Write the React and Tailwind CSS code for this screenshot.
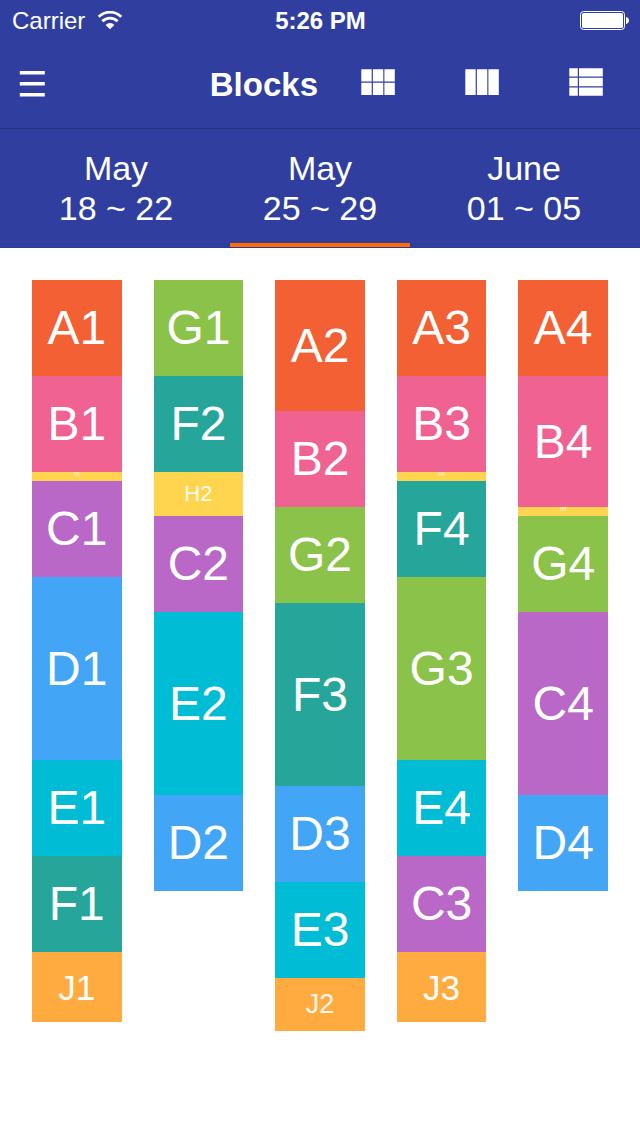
const COLORS = {
  A: "bg-[#f26033]",
  B: "bg-[#f06292]",
  C: "bg-[#ba68c8]",
  D: "bg-[#42a5f5]",
  E: "bg-[#00bcd4]",
  F: "bg-[#26a69a]",
  G: "bg-[#8bc34a]",
  H: "bg-[#ffd54f]",
  J: "bg-[#ffab40]",
};

const SIZES = {
  tiny: "h-[9px] items-start text-[5px] leading-[5px] text-white/80",
  short: "h-11 items-center text-[22px] leading-none text-white/90",
  small: "h-[53px] items-center text-[27px] leading-none text-white/90",
  medium: "h-[70px] items-center text-[35px] leading-none text-white",
  normal: "h-24 items-center text-5xl leading-none text-white",
  long: "h-[131px] items-center text-5xl leading-none text-white",
  double: "h-[183px] items-center text-5xl leading-none text-white",
};

const DAYS = [
  [["A1", "normal"], ["B1", "normal"], ["H1", "tiny"], ["C1", "normal"], ["D1", "double"], ["E1", "normal"], ["F1", "normal"], ["J1", "medium"]],
  [["G1", "normal"], ["F2", "normal"], ["H2", "short"], ["C2", "normal"], ["E2", "double"], ["D2", "normal"]],
  [["A2", "long"], ["B2", "normal"], ["G2", "normal"], ["F3", "double"], ["D3", "normal"], ["E3", "normal"], ["J2", "small"]],
  [["A3", "normal"], ["B3", "normal"], ["H3", "tiny"], ["F4", "normal"], ["G3", "double"], ["E4", "normal"], ["C3", "normal"], ["J3", "medium"]],
  [["A4", "normal"], ["B4", "long"], ["H4", "tiny"], ["G4", "normal"], ["C4", "double"], ["D4", "normal"]],
];

const WEEKS = [
  { month: "May", days: "18 ~ 22" },
  { month: "May", days: "25 ~ 29", active: true },
  { month: "June", days: "01 ~ 05" },
];

function StatusBar() {
  return (
    <div className="grid h-10 grid-cols-3 items-center pt-0.5 pr-[11px] pl-3 text-2xl leading-none">
      <div className="flex items-center gap-3">
        <span>Carrier</span>
        <svg className="mb-0.5 h-[19px] w-[26px]" viewBox="0 0 26 19" fill="none" stroke="currentColor" aria-hidden="true">
          <path d="M1.700 5.800a16 16 0 0 1 22.600 0" strokeWidth="2.800" />
          <path d="M5.400 10.200a10.700 10.700 0 0 1 15.200 0" strokeWidth="2.800" />
          <path d="M13 18.300L8.600 13.900a6.200 6.200 0 0 1 8.800 0z" fill="currentColor" stroke="none" />
        </svg>
      </div>
      <span className="text-center font-bold">5:26 PM</span>
      <svg className="mb-0.5 h-[19px] w-[49px] justify-self-end" viewBox="0 0 49 19" fill="currentColor" aria-hidden="true">
        <rect x="0.5" y="0.5" width="44" height="18" rx="3" fill="none" stroke="currentColor" />
        <rect x="2" y="2" width="41" height="15" rx="1.5" />
        <path d="M46 6c2 .4 3 1.700 3 3.500s-1 3.100-3 3.500z" />
      </svg>
    </div>
  );
}

function GridIcon() {
  return (
    <svg className="h-7 w-[34px]" viewBox="0 0 34 28" fill="currentColor" aria-hidden="true">
      <path d="M.3 1.300h10.400v12.100H.3zM11.900 1.300h10.400v12.100H11.900zM23.400 1.300h10.400v12.100h-10.400zM.3 14.800h10.400v12.100H.3zM11.900 14.800h10.400v12.100H11.900zM23.400 14.800h10.400v12.100h-10.400z" />
    </svg>
  );
}

function ColumnsIcon() {
  return (
    <svg className="h-7 w-[34px]" viewBox="0 0 34 28" fill="currentColor" aria-hidden="true">
      <path d="M.3 1.300h10.400v25.600H.3zM11.900 1.300h10.400v25.600H11.900zM23.400 1.300h10.400v25.600h-10.400z" />
    </svg>
  );
}

function ListIcon() {
  return (
    <svg className="h-7 w-[34px]" viewBox="0 0 34 28" fill="currentColor" aria-hidden="true">
      <path d="M.3.2h8.500v8.400H.3zM10 .2h23.800v8.400H10zM.3 9.800h8.500v8.400H.3zM10 9.800h23.800v8.400H10zM.3 19.400h8.500v8.400H.3zM10 19.400h23.800v8.400H10z" />
    </svg>
  );
}

function NavBar() {
  const views = [
    ["Grid view", GridIcon],
    ["Column view", ColumnsIcon],
    ["List view", ListIcon],
  ];
  return (
    <div className="flex h-[88px] items-center">
      <button type="button" aria-label="Menu" className="flex h-full w-16 items-center justify-center">
        <svg className="h-[26px] w-[26px]" viewBox="0 0 26 26" fill="currentColor" aria-hidden="true">
          <path d="M.8 0h25v3.500h-25zM.8 11h25v3.500h-25zM.8 22h25v3.500h-25z" />
        </svg>
      </button>
      <h1 className="flex-1 pr-2 text-right text-[33px] leading-none font-bold">Blocks</h1>
      <div className="flex h-full pr-0.5 pb-1">
        {views.map(([label, Icon]) => (
          <button key={label} type="button" aria-label={label} className="flex w-26 items-center justify-center">
            <Icon />
          </button>
        ))}
      </div>
    </div>
  );
}

function WeekTabs() {
  return (
    <nav className="grid h-30 grid-cols-3 gap-6 border-t border-b border-t-[#27327e] border-b-[#2b3990] px-[26px]">
      {WEEKS.map(({ month, days, active }) => (
        <button
          key={days}
          type="button"
          aria-current={active ? "true" : undefined}
          className={`flex flex-col items-center border-b-4 pt-[19px] text-[34px] leading-10 ${active ? "border-[#ff6d00]" : "border-transparent"}`}
        >
          <span>{month}</span>
          <span>{days}</span>
        </button>
      ))}
    </nav>
  );
}

export default function App() {
  return (
    <div className="min-h-screen bg-white font-['Liberation_Sans',Arial,sans-serif]">
      <header className="bg-[#303f9f] text-white">
        <StatusBar />
        <NavBar />
        <WeekTabs />
      </header>
      <main className="grid grid-cols-5 items-start gap-8 p-8">
        {DAYS.map((blocks, day) => (
          <div key={day} className="flex flex-col">
            {blocks.map(([name, size]) => (
              <div key={name} className={`flex justify-center ${COLORS[name[0]]} ${SIZES[size]}`}>
                {name}
              </div>
            ))}
          </div>
        ))}
      </main>
    </div>
  );
}
